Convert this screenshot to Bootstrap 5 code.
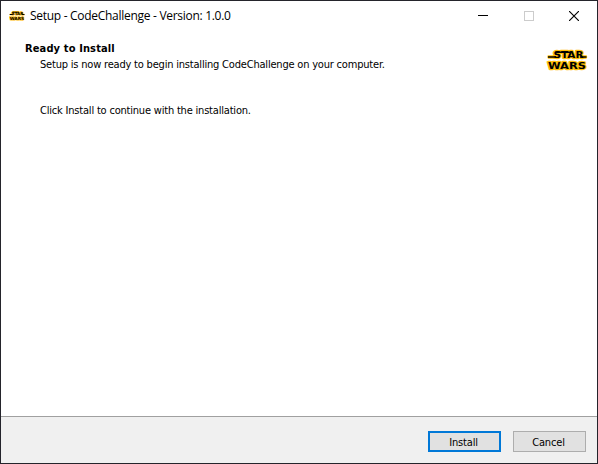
<!DOCTYPE html>
<html lang="en">
<head>
<meta charset="utf-8">
<meta name="viewport" content="width=device-width, initial-scale=1">
<title>Setup - CodeChallenge - Version: 1.0.0</title>
<link href="https://cdn.jsdelivr.net/npm/bootstrap@5.3.0/dist/css/bootstrap.min.css" rel="stylesheet">
<style>
  body { font-family: "DejaVu Sans Condensed", "DejaVu Sans", sans-serif; font-stretch: condensed; font-size: 11px; line-height: 14px; letter-spacing: -.197px; color: #000; }
  .setup-window { height: 464px; border: 1px solid #24242b; }
  .title-bar { height: 30px; padding-left: 8px; }
  .title-text { font-family: "Open Sans", sans-serif; font-stretch: normal; font-size: 12px; line-height: 16px; letter-spacing: -.29px; margin-left: 5px; }
  .win-btn { width: 45.5px; height: 30px; }
  .page-head { padding: 11px 9px 0 24px; }
  .page-title { font-size: 11px; line-height: 14px; letter-spacing: .13px; }
  .sub-line { padding-left: 15px; margin-top: 2px; }
  .saga-logo { margin-top: 6px; }
  .page-body { padding: 32px 0 0 39px; }
  .foot-bar { height: 47px; background: #f0f0f0; border-top: 1px solid #a0a0a0; padding: 0 11px 0 0; gap: 12px; }
  .dlg-btn { width: 73px; height: 21px; font-size: 11px; line-height: 1; letter-spacing: -.15px; color: #000; background: #e1e1e1; border: 1px solid #adadad; border-radius: 0; margin-top: 3px; }
  .dlg-btn span { display: block; padding: 2px 2px 0 0; }
  .dlg-btn-main { border: 2px solid #0078d7; }
  .logo-word { font-family: "DejaVu Sans", sans-serif; font-stretch: normal; font-weight: 700; letter-spacing: 0; }
</style>
</head>
<body class="overflow-hidden">
<main class="setup-window d-flex flex-column bg-white">
  <header class="title-bar d-flex align-items-center">
    <svg width="16" height="12" viewBox="0 0 42 24" preserveAspectRatio="none" aria-hidden="true"><use href="#saga"/></svg>
    <span class="title-text text-nowrap">Setup - CodeChallenge - Version: 1.0.0</span>
    <div class="d-flex ms-auto">
      <span class="win-btn d-flex align-items-center justify-content-center"><svg width="10" height="10"><path d="M0 4h10v1H0z"/></svg></span>
      <span class="win-btn d-flex align-items-center justify-content-center"><svg width="10" height="10" shape-rendering="crispEdges"><path d="M.5 .5h9v9h-9z" fill="none" stroke="#ccc"/></svg></span>
      <span class="win-btn d-flex align-items-center justify-content-center"><svg width="10" height="10"><path d="M0 0l10 10M10 0L0 10" stroke="#000" stroke-width="1.15"/></svg></span>
    </div>
  </header>
  <section class="page-head d-flex justify-content-between">
    <div>
      <h1 class="page-title fw-bold m-0">Ready to Install</h1>
      <p class="sub-line mb-0 text-nowrap">Setup is now ready to begin installing CodeChallenge on your computer.</p>
    </div>
    <svg class="saga-logo" width="42" height="24" viewBox="0 0 42 24" role="img" aria-label="Star Wars">
      <g id="saga" class="logo-word" font-size="8.500" fill="#000" stroke="#ffbe0a" stroke-width="2.300" stroke-linejoin="round">
        <g fill="none">
          <path d="M2.500 8.500h6v1h-6zM35 8.500h5v1h-5zM10 3.800h16v1h-16z"/>
          <text x="7.500" y="9.800" textLength="30" lengthAdjust="spacingAndGlyphs">STAR</text>
          <text x="2" y="20.900" textLength="38" lengthAdjust="spacingAndGlyphs">WARS</text>
        </g>
        <g stroke="none">
          <path d="M2 8.200h8v1.600H2zM34 8.200h6.500v1.600H34zM9.500 3.600h16v1.500h-16z"/>
          <text x="7.500" y="9.800" textLength="30" lengthAdjust="spacingAndGlyphs">STAR</text>
          <text x="2" y="20.900" textLength="38" lengthAdjust="spacingAndGlyphs">WARS</text>
        </g>
      </g>
    </svg>
  </section>
  <section class="page-body flex-grow-1">Click Install to continue with the installation.</section>
  <footer class="foot-bar d-flex align-items-center justify-content-end">
    <button type="button" class="btn dlg-btn dlg-btn-main p-0"><span>Install</span></button>
    <button type="button" class="btn dlg-btn p-0"><span>Cancel</span></button>
  </footer>
</main>
<script src="https://cdn.jsdelivr.net/npm/bootstrap@5.3.0/dist/js/bootstrap.bundle.min.js"></script>
</body>
</html>
